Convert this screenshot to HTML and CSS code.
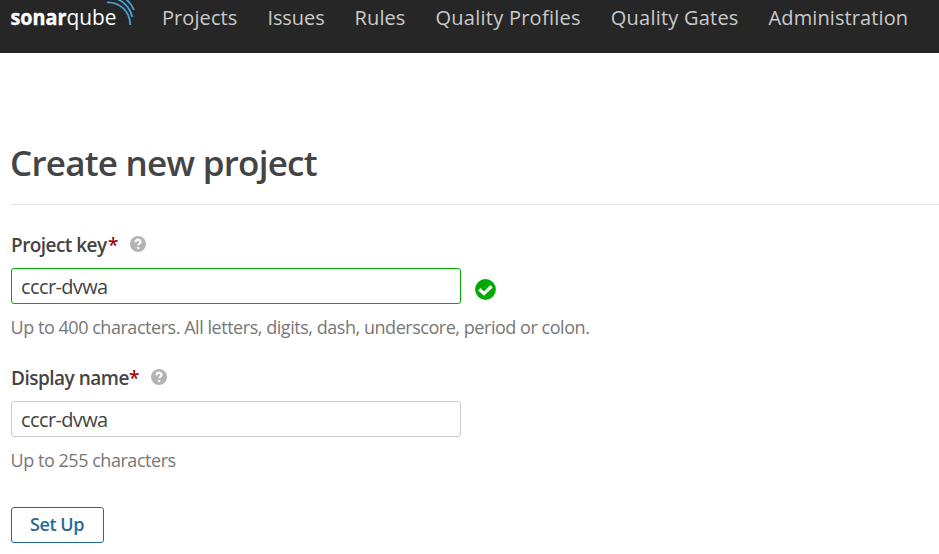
FILE: index.html
```html
<!DOCTYPE html>
<html lang="en">
<head>
<meta charset="utf-8">
<title>Create new project</title>
<link rel="stylesheet" href="styles.css">
</head>
<body>
<header class="navbar">
  <a class="logo" aria-label="sonarqube">
    <svg width="126" height="53" viewBox="0 0 126 53">
      <text class="logo-bold" x="-0.500" y="24.800" textLength="56" lengthAdjust="spacingAndGlyphs">sonar</text>
      <text class="logo-light" x="55.500" y="24.800" textLength="50" lengthAdjust="spacingAndGlyphs">qube</text>
      <g class="waves">
        <path d="M96 2.300C109 2 119.200 11.500 119.200 25"/>
        <path d="M102 -2.500C111.500 0 118.500 7 121.500 17"/>
        <path d="M110 -4C116 -1 120.500 4 123 10"/>
      </g>
    </svg>
  </a>
  <nav class="menu">
    <a class="projects">Projects</a>
    <a class="issues">Issues</a>
    <a class="rules">Rules</a>
    <a class="profiles">Quality Profiles</a>
    <a class="gates">Quality Gates</a>
    <a class="admin">Administration</a>
  </nav>
</header>
<main class="page">
  <h1>Create new project</h1>
  <form>
    <div class="field">
      <label><span class="key-label">Project key</span><em>*</em>
        <svg class="help" viewBox="0 0 16 16"><circle cx="8" cy="8" r="8"/><path d="M5.500 6.200C5.600 2.600 10.700 3 10.500 6.100C10.400 7.700 8.200 7.800 8.200 9.300"/><path d="M8.200 10.900V13"/></svg>
      </label>
      <div class="control">
        <input class="valid" type="text" value="cccr-dvwa">
        <svg class="check" viewBox="0 0 21 21"><circle cx="10.500" cy="10.500" r="10.400"/><path d="M4.300 10.300L8.900 14.600L16.600 7.200"/></svg>
      </div>
      <p>Up to 400 characters. All letters, digits, dash, underscore, period or colon.</p>
    </div>
    <div class="field">
      <label><span class="name-label">Display name</span><em>*</em>
        <svg class="help" viewBox="0 0 16 16"><circle cx="8" cy="8" r="8"/><path d="M5.500 6.200C5.600 2.600 10.700 3 10.500 6.100C10.400 7.700 8.200 7.800 8.200 9.300"/><path d="M8.200 10.900V13"/></svg>
      </label>
      <div class="control"><input type="text" value="cccr-dvwa"></div>
      <p>Up to 255 characters</p>
    </div>
    <button type="button">Set Up</button>
  </form>
</main>
</body>
</html>
```

FILE: styles.css
```css
* { box-sizing: border-box; }
body {
  margin: 0;
  background: #fff;
  color: #444;
  font-family: "Open Sans", "Noto Sans", sans-serif;
  font-size: 19px;
  overflow: hidden;
}
.navbar {
  display: flex;
  height: 53px;
  padding-left: 11px;
  background: #262626;
}
.logo { width: 151px; height: 53px; }
.logo svg { display: block; overflow: visible; }
.logo-bold, .logo-light { fill: #fff; font-family: "Open Sans", sans-serif; font-size: 21px; }
.logo-bold { font-weight: 700; stroke: #fff; stroke-width: 0.4; }
.waves { fill: none; stroke: #4b9fd5; stroke-width: 1.8; }
.menu {
  display: flex;
  gap: 30px;
  height: 36px;
  line-height: 36px;
  font-size: 20px;
  color: #cacaca;
  white-space: nowrap;
}
.projects { letter-spacing: 0.08px; }
.issues { letter-spacing: -0.08px; }
.rules { letter-spacing: 0.08px; }
.profiles { letter-spacing: 0.26px; }
.gates { letter-spacing: 0.22px; }
.admin { letter-spacing: 0.1px; }
.page { padding-left: 11px; }
h1 {
  height: 152px;
  margin: 0;
  padding-top: 86px;
  border-bottom: 1px solid #e6e6e6;
  font-size: 35px;
  font-weight: 600;
  line-height: 48px;
  letter-spacing: -0.75px;
  text-indent: -1px;
  white-space: nowrap;
}
.field { height: 133px; }
form { padding-top: 26px; }
label {
  display: flex;
  align-items: center;
  height: 26px;
  font-weight: 600;
  line-height: 26px;
  white-space: nowrap;
}
.key-label, .name-label, em { padding-top: 2px; }
.key-label { width: 97px; letter-spacing: -0.55px; }
.name-label { width: 118px; letter-spacing: -0.5px; }
em { width: 10px; color: #a4030f; font-style: normal; }
.help { width: 16px; height: 16px; margin: -1px 0 0 12px; }
.help circle { fill: #b4b4b4; }
.help path { fill: none; stroke: #fff; stroke-width: 2.1; }
.control { display: flex; height: 36px; margin-top: 11px; }
input {
  width: 450px;
  height: 36px;
  padding: 0 9px;
  border: 1px solid #cdcdcd;
  border-radius: 3px;
  background: #fff;
  color: #444;
  font: inherit;
  font-size: 20px;
  letter-spacing: -0.62px;
}
.valid { border-color: #0a0; }
.check { width: 21px; height: 21px; margin: 10.500px 0 0 13.500px; }
.check circle { fill: #0a0; }
.check path { fill: none; stroke: #fff; stroke-width: 3.3; }
p {
  margin: 11px 0 0;
  color: #777;
  font-size: 18px;
  line-height: 24px;
  letter-spacing: -0.46px;
  text-indent: -0.5px;
  white-space: nowrap;
}
button {
  display: block;
  width: 93px;
  height: 36px;
  margin-top: 10px;
  padding: 0 1px 2px 0;
  border: 1px solid #236a97;
  border-radius: 3px;
  background: #fff;
  color: #236a97;
  font: inherit;
  font-weight: 600;
  font-size: 18px;
  letter-spacing: -0.45px;
}
```
